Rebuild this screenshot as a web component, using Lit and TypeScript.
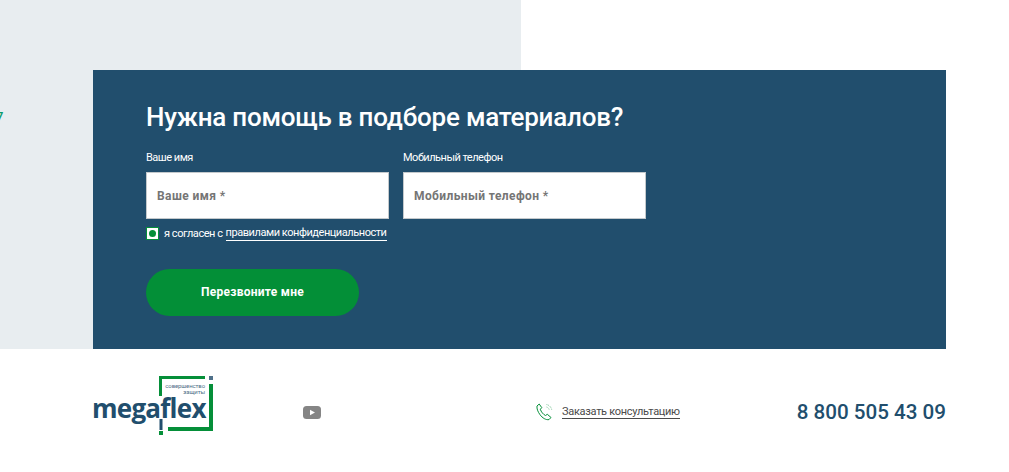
import { LitElement, html, css } from 'lit';
import { customElement } from 'lit/decorators.js';

@customElement('app-root')
export class AppRoot extends LitElement {
  static styles = css`
    :host {
      display: block;
      width: 100%;
      height: 472px;
      overflow: hidden;
      background: #fff;
      font-family: Roboto, "Liberation Sans", sans-serif;
    }
    .top {
      position: relative;
      box-sizing: border-box;
      height: 349px;
      padding: 70px 63px 0 93px;
      background: linear-gradient(to right, #e8edf0 521px, #fff 521px);
    }
    .stray {
      position: absolute;
      left: -4px;
      top: 109px;
      font-size: 13px;
      line-height: 16px;
      font-weight: 500;
      color: #0a9a6a;
    }
    .panel {
      box-sizing: border-box;
      height: 279px;
      padding: 30px 0 0 53px;
      background: #214e6d;
      color: #fff;
    }
    h2 {
      margin: 0 0 17px;
      font-size: 26px;
      line-height: 34px;
      font-weight: 500;
      letter-spacing: -0.23px;
    }
    .fields {
      display: flex;
      gap: 14px;
    }
    .field {
      display: flex;
      flex-direction: column;
      gap: 7px;
    }
    label {
      font-size: 11px;
      line-height: 14px;
      letter-spacing: -0.5px;
    }
    .input {
      box-sizing: border-box;
      width: 243px;
      height: 47px;
      padding-left: 10px;
      display: flex;
      align-items: center;
      background: #fff;
      border: 1px solid #c4c9cc;
      font-size: 12px;
      font-weight: 700;
      letter-spacing: 0.4px;
      color: #757575;
    }
    .agree {
      display: flex;
      align-items: center;
      margin-top: 7px;
      font-size: 11px;
      line-height: 14px;
      letter-spacing: -0.45px;
      white-space: pre;
    }
    .check {
      box-sizing: border-box;
      width: 13px;
      height: 13px;
      margin-right: 5px;
      background: #fff;
      border: 1px solid #058f39;
      display: flex;
      align-items: center;
      justify-content: center;
    }
    .check i {
      width: 7px;
      height: 7px;
      border-radius: 50%;
      background: #058f39;
    }
    .agree a {
      margin-left: 3px;
      border-bottom: 1px solid #fff;
      color: #fff;
    }
    button {
      display: block;
      width: 213px;
      height: 47px;
      margin-top: 28px;
      padding: 0 0 2px;
      border: 0;
      border-radius: 24px;
      background: #038f37;
      color: #fff;
      font: 700 12px Roboto, sans-serif;
      letter-spacing: 0.25px;
    }
    footer {
      display: flex;
      align-items: center;
      height: 123px;
      padding: 0 63px 0 93px;
    }
    .logo {
      position: relative;
      width: 122px;
      height: 60px;
      margin-top: -10px;
      flex: none;
    }
    .logo svg {
      position: absolute;
      left: 66px;
      top: 0;
    }
    .word {
      position: absolute;
      left: -1px;
      top: 19px;
      font: 700 26px/26px "Open Sans", sans-serif;
      letter-spacing: -0.75px;
      color: #214e6d;
    }
    .tag {
      position: absolute;
      left: 66px;
      top: 7px;
      width: 46px;
      font-size: 6px;
      line-height: 6px;
      letter-spacing: -0.1px;
      text-align: right;
      color: #4f7089;
    }
    .yt {
      margin: 3px 0 0 88px;
      display: block;
    }
    .consult {
      display: flex;
      align-items: center;
      margin: 3px 0 0 215px;
      font-size: 11px;
      letter-spacing: -0.3px;
      color: #4a4a4a;
    }
    .consult svg {
      margin-right: 9px;
    }
    .consult a {
      border-bottom: 1px solid #4a4a4a;
      line-height: 13px;
    }
    .phone {
      margin: 2px 0 0 auto;
      font-size: 20.6px;
      font-weight: 500;
      color: #214e6d;
    }
  `;

  render() {
    return html`
      <section class="top">
        <span class="stray">7</span>
        <div class="panel">
          <h2>Нужна помощь в подборе материалов?</h2>
          <div class="fields">
            <div class="field">
              <label>Ваше имя</label>
              <div class="input">Ваше имя *</div>
            </div>
            <div class="field">
              <label>Мобильный телефон</label>
              <div class="input">Мобильный телефон *</div>
            </div>
          </div>
          <div class="agree">
            <span class="check"><i></i></span>я согласен с<a>правилами конфиденциальности</a>
          </div>
          <button>Перезвоните мне</button>
        </div>
      </section>
      <footer>
        <div class="logo">
          <svg width="56" height="60" viewBox="0 0 56 60" fill="#058f39">
            <path d="M0 0h46v3H3v17H0z" />
            <path d="M50 8h4v47H9v-4h41z" />
            <rect x="0" y="55" width="4" height="4" />
            <rect x="50" y="0" width="4" height="4" fill="#4f7089" />
            <rect x="0.5" y="43" width="3" height="11" fill="#214e6d" />
          </svg>
          <span class="tag">совершенство<br />защиты</span>
          <span class="word">megaflex</span>
        </div>
        <svg class="yt" width="18" height="13" viewBox="0 0 18 13">
          <rect width="18" height="13" rx="3.5" fill="#858585" />
          <path d="M7 3.7v5.6l5-2.8z" fill="#fff" />
        </svg>
        <div class="consult">
          <svg width="17" height="18" viewBox="0 0 17 18" fill="none" stroke="#058f39">
            <path d="M1 3 3.2 1l2.6 3.7-1.5 1.5c.7 2.5 3 5.3 5.2 6.3l1.800-1.200 3.700 3.200-2 2.100C10 17.200 6.400 15 4 11.700 1.800 8.700.6 5.500 1 3z" />
            <path d="M10.500 1.500c2.600.5 4.700 2.600 5.200 5.200M10.500 4c1.300.3 2.400 1.400 2.700 2.700" stroke-width="0.8" stroke-opacity="0.6" stroke-dasharray="1 0.7" />
          </svg>
          <a>Заказать консультацию</a>
        </div>
        <div class="phone">8 800 505 43 09</div>
      </footer>
    `;
  }
}
